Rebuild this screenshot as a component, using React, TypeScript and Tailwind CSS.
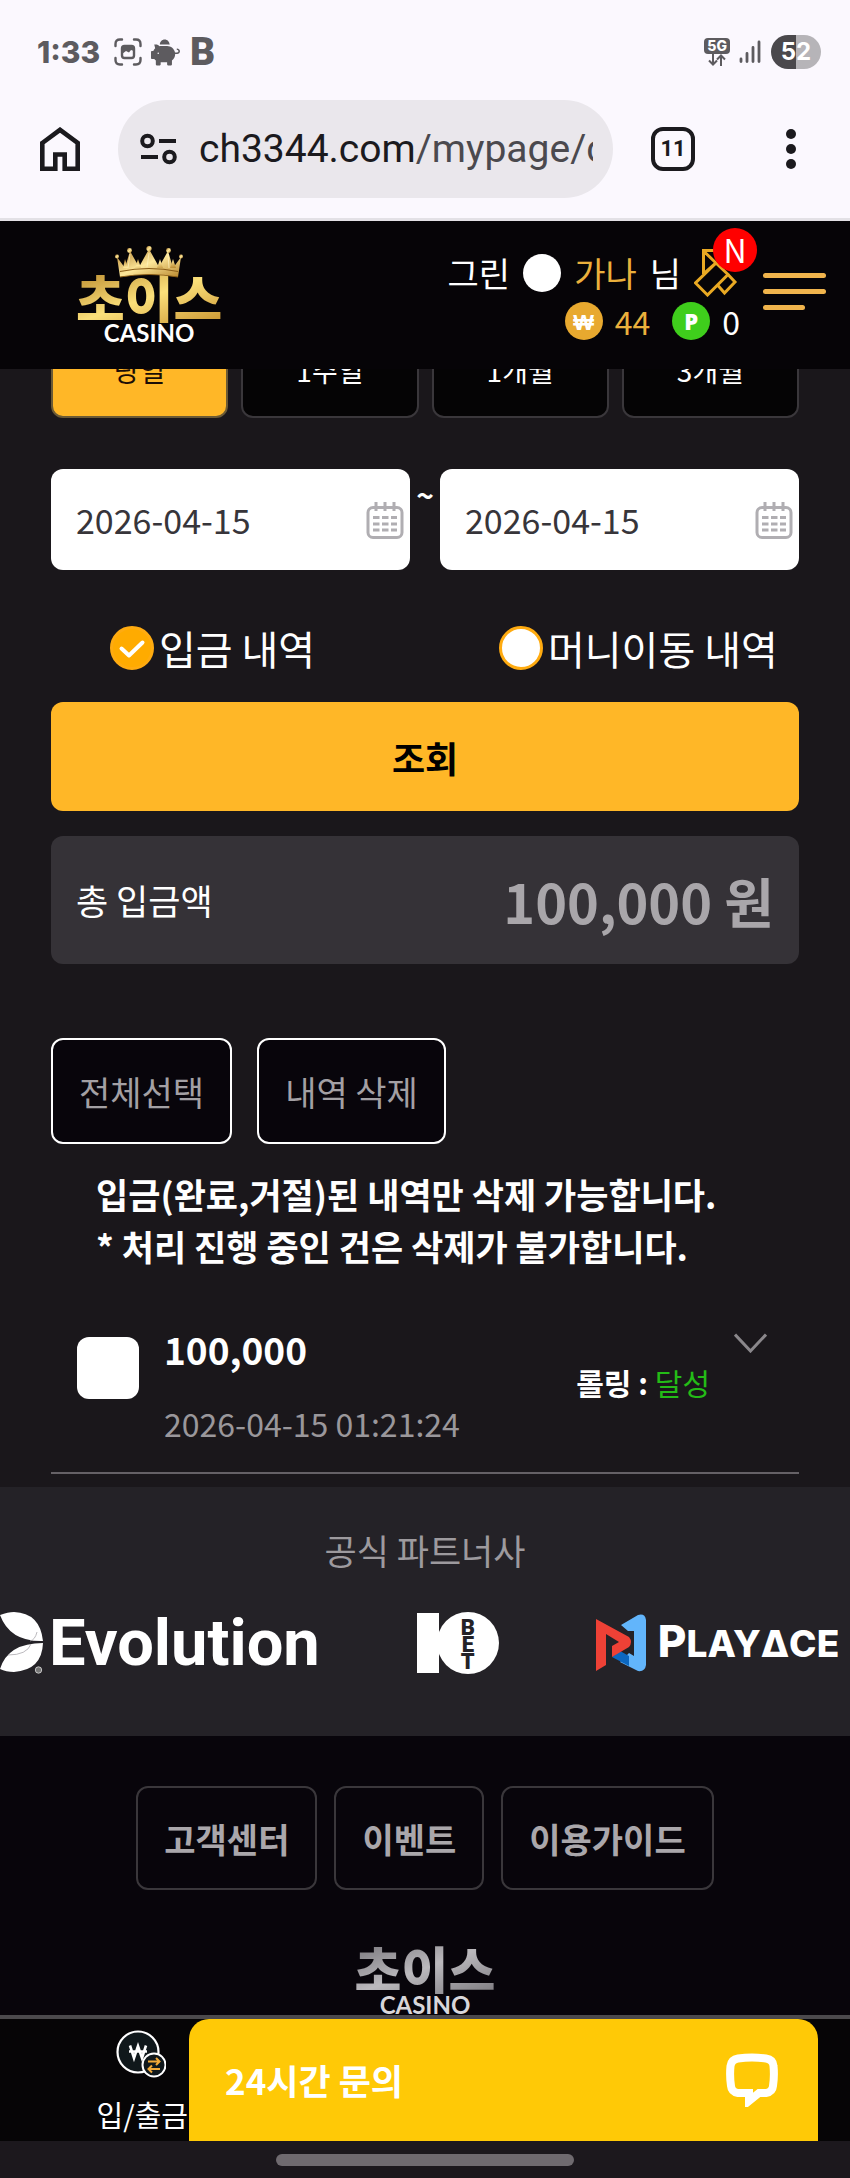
import { useState } from 'react'
import { FaPiggyBank } from 'react-icons/fa'

const periods = ['당일', '1주일', '1개월', '3개월']
const footerLinks = ['고객센터', '이벤트', '이용가이드']

export default function App() {
  const [period, setPeriod] = useState('당일')
  const [kind, setKind] = useState('deposit')
  const [from, setFrom] = useState('2026-04-15')
  const [to, setTo] = useState('2026-04-15')
  const [checked, setChecked] = useState(false)

  return (
    <div className="w-full overflow-hidden bg-[#1a171b] font-['Noto_Sans_CJK_KR',sans-serif] text-white">
      <StatusBar />
      <BrowserBar />
      <Header />

      <main className="px-[51px] pb-[13px]">
        <div className="flex h-[49px] items-end gap-[13px] overflow-hidden">
          {periods.map(p => (
            <button
              key={p}
              onClick={() => setPeriod(p)}
              className={`h-[96px] flex-1 shrink-0 rounded-xl border-2 text-[28px] ${
                p === period ? 'border-[#6b5a35] bg-[#ffb727] text-[#1a0d06]' : 'border-[#3a373b] bg-[#050405]'
              }`}
            >
              {p}
            </button>
          ))}
        </div>

        <div className="mt-[51px] flex">
          <DateBox label="시작일" value={from} onChange={setFrom} />
          <span className="w-[30px] text-center text-[30px] font-bold leading-[50px]">~</span>
          <DateBox label="종료일" value={to} onChange={setTo} />
        </div>

        <div className="mt-[56px] grid grid-cols-2 gap-[30px]">
          <Radio label="입금 내역" checked={kind === 'deposit'} onChange={() => setKind('deposit')} />
          <Radio label="머니이동 내역" checked={kind === 'move'} onChange={() => setKind('move')} />
        </div>

        <button className="mt-8 h-[109px] w-full rounded-xl bg-[#ffb727] text-[36px] font-bold text-black">조회</button>

        <div className="mt-[25px] flex h-[128px] items-center justify-between rounded-xl bg-[#353237] px-[25px]">
          <span className="text-[35px]">총 입금액</span>
          <span className="text-[54px] font-bold text-[#a9a6aa]">100,000 원</span>
        </div>

        <div className="mt-[74px] flex gap-[25px] text-[34px] text-[#a3a0a4]">
          <button className="h-[106px] rounded-xl border-2 border-white bg-[#08050b] px-[26px]">전체선택</button>
          <button className="h-[106px] rounded-xl border-2 border-white bg-[#08050b] px-[26px]">내역 삭제</button>
        </div>

        <p className="mt-6 pl-[45px] text-[35px] font-bold leading-[52px]">
          입금(완료,거절)된 내역만 삭제 가능합니다.
          <br />* 처리 진행 중인 건은 삭제가 불가합니다.
        </p>

        <div className="mt-[48px] flex border-b-2 border-[#656166] pb-6 pl-[26px] pr-8">
          <input
            type="checkbox"
            aria-label="100,000 내역 선택"
            checked={checked}
            onChange={e => setChecked(e.target.checked)}
            className="mt-[17px] h-[62px] w-[62px] appearance-none rounded-xl bg-white checked:bg-[#ffb727]"
          />
          <div className="ml-[25px] flex-1">
            <div className="text-[37px] font-bold leading-[58px]">100,000</div>
            <div className="mt-5 text-[32px] leading-[50px] text-[#9a979b]">2026-04-15 01:21:24</div>
          </div>
          <div className="mt-[42px] text-[30px] font-bold leading-10">
            롤링 : <span className="font-normal text-[#24bb17]">달성</span>
          </div>
          <button aria-label="상세 보기" className="ml-6 mt-[13px] self-start">
            <svg width="33" height="20" viewBox="0 0 33 20" fill="none" stroke="#8a878b" strokeWidth="3">
              <path d="M1 1.5 16.5 18 32 1.5" />
            </svg>
          </button>
        </div>
      </main>

      <Partners />

      <footer className="flex flex-col items-center bg-[#08050b] pt-[50px]">
        <nav className="flex gap-[17px]">
          {footerLinks.map(l => (
            <a
              key={l}
              href="#"
              className="flex h-[104px] items-center rounded-xl border-2 border-[#3a373b] px-[26px] text-[34px] font-bold text-[#aaa7ab]"
            >
              {l}
            </a>
          ))}
        </nav>
        <div className="mt-[52px] flex flex-col items-center">
          <span className="bg-gradient-to-br from-[#77757a] via-[#bbb9bd] to-[#7d7b80] bg-clip-text text-[51px] font-black leading-[52px] text-transparent">
            초이스
          </span>
          <span className="font-['Lato',sans-serif] text-[24px] font-bold leading-[21px] text-[#d8d6da]">CASINO</span>
        </div>
      </footer>

      <BottomBar />
    </div>
  )
}

function StatusBar() {
  return (
    <div className="flex h-[100px] items-center justify-between bg-[#fbf8fe] pl-[37px] pr-[29px] pt-1 text-[#5d5b5f]">
      <div className="flex items-center">
        <span className="w-[77px] font-['Inter',sans-serif] text-[30px] font-extrabold">1:33</span>
        <svg width="28" height="28" viewBox="0 0 28 28" fill="none" stroke="currentColor" strokeWidth="2.4" strokeLinecap="round">
          <path d="M1.5 8V6Q1.5 1.5 6 1.5H8M20 1.5h2Q26.5 1.5 26.5 6v2M26.5 20v2q0 4.5-4.5 4.5h-2M8 26.5H6Q1.5 26.5 1.5 22v-2" />
          <rect x="8" y="8" width="12" height="12" rx="2.5" />
          <path d="M8 13.5V10q0-2 2-2h8q2 0 2 2v3l-3-1-2 2.5-3-1.5-4 3z" fill="currentColor" stroke="none" />
        </svg>
        <FaPiggyBank size={29} className="ml-[9px] -scale-x-100" />
        <span className="ml-[10px] font-['Roboto',sans-serif] text-[39px] font-black leading-10">B</span>
      </div>
      <div className="flex items-center font-['Inter',sans-serif]">
        <div className="flex flex-col items-center">
          <span className="rounded bg-[#5d5b5f] px-[3px] text-[14px] font-extrabold leading-4 text-white">5G</span>
          <svg width="18" height="12" viewBox="0 0 18 12" fill="none" stroke="currentColor" strokeWidth="2">
            <path d="M5 0v10M1 6.5l4 4 4-4M13 12V2M9 5.5l4-4 4 4" />
          </svg>
        </div>
        <svg width="22" height="24" viewBox="0 0 22 24" className="ml-[9px]" stroke="currentColor" strokeWidth="2.8" strokeLinecap="round">
          <path d="M2 19v2.5M8 13.5v8M14 7.5v14M20 2v19.5" />
        </svg>
        <span className="ml-[10px] flex h-[34px] w-[50px] items-center justify-center rounded-full bg-linear-to-r from-[#4a484c] from-50% to-[#b6b4b8] to-50% text-[24px] font-bold text-white">
          52
        </span>
      </div>
    </div>
  )
}

function BrowserBar() {
  return (
    <div className="flex items-center border-b-[3px] border-[#e3e1e6] bg-[#fbf8fe] pb-5 pl-10 pr-[54px] text-[#1b1a1e]">
      <button aria-label="홈">
        <svg width="40" height="44" viewBox="0 0 40 44" fill="none" stroke="currentColor" strokeWidth="4.6">
          <path d="M2.3 16 20 2.8 37.7 16v25.7H24.7V27.5h-9.4v14.2H2.3z" />
        </svg>
      </button>
      <button className="ml-[38px] flex h-[98px] flex-1 items-center overflow-hidden rounded-full bg-[#eae7ec] pl-[22px] pr-5">
        <svg width="37" height="32" viewBox="0 0 37 32" fill="none" stroke="currentColor" strokeWidth="4" className="shrink-0">
          <circle cx="7.5" cy="8" r="5.3" />
          <path d="M19 8h17M1 24h17" />
          <circle cx="29.5" cy="24" r="5.3" />
        </svg>
        <span className="ml-[22px] flex-1 overflow-hidden whitespace-nowrap text-left font-['Roboto',sans-serif] text-[39px] leading-[60px]">
          ch3344.com<span className="text-[#4b494e]">/mypage/c</span>
        </span>
      </button>
      <button className="ml-[38px] h-11 w-11 rounded-xl border-4 border-[#1b1a1e] font-['Roboto',sans-serif] text-[22px] font-bold leading-9">
        11
      </button>
      <button aria-label="메뉴 더보기" className="ml-[91px]">
        <svg width="10" height="40" viewBox="0 0 10 40" fill="currentColor">
          <circle cx="5" cy="5" r="5" />
          <circle cx="5" cy="20" r="5" />
          <circle cx="5" cy="35" r="5" />
        </svg>
      </button>
    </div>
  )
}

function Header() {
  return (
    <header className="flex items-start justify-between bg-[#060407] pb-[26px] pl-[76px] pr-6 pt-[25px]">
      <a href="#" aria-label="초이스 카지노" className="flex flex-col items-center">
        <Crown />
        <span className="-mt-[9px] bg-gradient-to-br from-[#b98a2a] via-[#fbe07a] to-[#c9952f] bg-clip-text text-[53px] font-black leading-[52px] text-transparent">
          초이스
        </span>
        <span className="font-['Lato',sans-serif] text-[24px] font-bold leading-5">CASINO</span>
      </a>
      <div className="flex">
        <div className="mt-2 flex flex-col items-end gap-[10px] leading-[38px]">
          <div className="flex h-[38px] items-center gap-[13px] text-[34px] leading-[38px]">
            <span>그린</span>
            <span className="h-[38px] w-[38px] rounded-full bg-white" />
            <span className="text-[#eab03c]">가나</span>
            <span>님</span>
            <a href="#" aria-label="쿠폰" className="relative">
              <svg width="46" height="48" viewBox="0 0 46 48" fill="none" stroke="#e9a923" strokeWidth="3">
                <path d="M22 1.5H9.5V25M9.5 2 22 14M22 14 1.5 34 13.5 46 34 25.5zM24 36.5l6.5 7.5L41 33 34 25.5M22 14 9.5 25" />
              </svg>
              <span className="absolute -top-[21px] left-[19px] h-11 w-11 rounded-full bg-[#ff0000] text-center text-[32px] leading-[42px]">N</span>
            </a>
          </div>
          <div className="flex items-center text-[32px]">
            <Coin className="bg-[#e8a92f]">₩</Coin>
            <span className="ml-3 text-[#eab03c]">44</span>
            <Coin className="ml-[22px] bg-[#3fce1c]">P</Coin>
            <span className="ml-3">0</span>
          </div>
        </div>
        <button aria-label="메뉴" className="ml-[23px] mt-[27px] flex flex-col gap-[11px]">
          <span className="h-[5px] w-[63px] rounded-full bg-[#f0b44c]" />
          <span className="h-[5px] w-[63px] rounded-full bg-[#f0b44c]" />
          <span className="h-[5px] w-[42px] rounded-full bg-[#f0b44c]" />
        </button>
      </div>
    </header>
  )
}

function Coin({ className, children }: { className: string; children: React.ReactNode }) {
  return (
    <span className={`h-[38px] w-[38px] rounded-full text-center font-['Open_Sans',sans-serif] text-[22px] font-extrabold leading-[38px] text-white ${className}`}>
      {children}
    </span>
  )
}

function Crown() {
  return (
    <svg width="68" height="34" viewBox="0 0 68 34" className="relative z-10">
      <defs>
        <linearGradient id="crown" x1="0" y1="0" x2="1" y2="1">
          <stop offset="0" stopColor="#b07c28" />
          <stop offset="0.5" stopColor="#fde79a" />
          <stop offset="1" stopColor="#b8862b" />
        </linearGradient>
      </defs>
      <g fill="url(#crown)">
        <path d="M2 11 10 22 15 5 24 21 34 3 44 21 53 5 58 22 66 11 63 31Q34 26 5 31z" />
        <path d="m10 13 3 9H8zM58 13l3 9h-6zM23 13l3 9h-6zM45 13l3 9h-6z" />
        <circle cx="2" cy="10.5" r="1.9" />
        <circle cx="14.5" cy="4.5" r="2.4" />
        <circle cx="34" cy="2.6" r="2.6" />
        <circle cx="53.5" cy="4.5" r="2.4" />
        <circle cx="66" cy="10.5" r="1.9" />
      </g>
      <path d="M5 25.5Q34 19.5 63 25.5M5 31Q34 26 63 31" fill="none" stroke="#8a5c17" strokeWidth="1.2" />
      <path d="M15 8 13 22M34 7l-2 14M53 8l1 14" stroke="#fff3c0" strokeWidth="1" opacity="0.7" />
    </svg>
  )
}

function DateBox({ label, value, onChange }: { label: string; value: string; onChange: (v: string) => void }) {
  return (
    <div className="flex h-[101px] min-w-0 flex-1 items-center rounded-xl bg-white pl-[25px] pr-[6px]">
      <input
        type="text"
        aria-label={label}
        value={value}
        onChange={e => onChange(e.target.value)}
        className="min-w-0 flex-1 bg-transparent text-[34px] leading-[52px] text-[#37353a] outline-none"
      />
      <button aria-label={`${label} 달력`}>
        <svg width="38" height="38" viewBox="0 0 38 38" fill="none" stroke="#b0aeb2" strokeWidth="3">
          <rect x="2" y="6.5" width="34" height="30" rx="5" />
          <path d="M10 1v9M19 1v9M28 1v9" />
          <path d="M7 16.5h24M7 23h24M7 29h24" strokeDasharray="6.5 2.5" />
        </svg>
      </button>
    </div>
  )
}

function Radio({ label, checked, onChange }: { label: string; checked: boolean; onChange: () => void }) {
  return (
    <label className="flex h-11 items-center whitespace-nowrap pl-[59px] text-[40px]">
      <span className="grid">
        <input
          type="radio"
          name="kind"
          checked={checked}
          onChange={onChange}
          className="col-start-1 row-start-1 h-11 w-11 appearance-none rounded-full border-[3px] border-[#ffab10] bg-white checked:bg-[#ffab00]"
        />
        {checked && (
          <svg width="44" height="44" viewBox="0 0 44 44" className="pointer-events-none col-start-1 row-start-1" fill="none" stroke="#fff" strokeWidth="4" strokeLinecap="round" strokeLinejoin="round">
            <path d="M11.5 22.5 19 29.5 32.5 16.5" />
          </svg>
        )}
      </span>
      <span className="ml-[5px]">{label}</span>
    </label>
  )
}

function Partners() {
  return (
    <section className="bg-[#242227] pb-[63px] pt-[38px]">
      <h2 className="text-center text-[35px] leading-[50px] text-[#9d9a9e]">공식 파트너사</h2>
      <div className="mt-[37px] flex h-[61px] items-center gap-[97px] whitespace-nowrap">
        <div className="flex shrink-0 items-center">
          <svg width="43" height="62" viewBox="0 0 43 62" fill="#fff">
            <path d="M0 3Q8 0 14 0 40 1 43 29 10 30 0 3zM43 31Q42 58 14 60 6 60 0 57 8 31 43 31z" />
            <path d="M37 20Q35 28 30 29M8 43Q27 43 31 32" fill="none" stroke="#a9a7ac" strokeWidth="0.8" />
            <circle cx="38.5" cy="58" r="3.2" fill="#777" stroke="#ddd" strokeWidth="0.8" />
          </svg>
          <span className="ml-[6px] font-['Roboto',sans-serif] text-[65px] font-bold leading-[60px]">Evolution</span>
        </div>
        <div className="flex shrink-0 items-center">
          <span className="h-[60px] w-[22px] bg-white" />
          <span className="-ml-[2px] flex h-[62px] w-[62px] flex-col items-center justify-center rounded-full bg-white pt-[3px] font-['Roboto',sans-serif] text-[22px] font-black leading-[17px] text-[#242227]">
            <span>B</span>
            <span>E</span>
            <span>T</span>
          </span>
        </div>
        <div className="flex shrink-0 items-center">
          <svg width="50" height="58" viewBox="0 0 50 58">
            <path d="M25 11 42 1Q49-1 50 6V51Q49 58 42 57L24 48 33 39 38 42V17L32 17z" fill="#62b5fb" />
            <path d="M16 43 24 37 33 42V52z" fill="#0c67c0" />
            <path d="M0 5 33 23Q37 28 33 33L16 43V32L23 28 10 20V51L0 57z" fill="#ee4136" />
          </svg>
          <span className="ml-3 font-['Inter',sans-serif] text-[37px] font-extrabold leading-[50px]">
            <span className="text-[44px]">P</span>LAYΔCE
          </span>
        </div>
      </div>
    </section>
  )
}

function BottomBar() {
  return (
    <div>
      <div className="flex border-t-4 border-[#4b494c] bg-[#060506]">
        <a href="#" className="flex w-[189px] flex-col items-end pr-px pt-[11px]">
          <svg width="50" height="48" viewBox="0 0 50 48" className="mr-[22px]">
            <circle cx="22" cy="22" r="20.5" fill="#10181b" stroke="#fff" strokeWidth="2.2" />
            <path d="M14 15.5 18 28 22 16 26 28 30 15.5M13 21.5H31" fill="none" stroke="#fff" strokeWidth="2.6" />
            <circle cx="38" cy="35" r="11.5" fill="#10181b" stroke="#fff" strokeWidth="2" />
            <path d="M32 31.5h11M40 28l3.5 3.5L40 35M44 39H33M36 35.5 32.5 39l3.5 3.5" fill="none" stroke="#f0a838" strokeWidth="2" />
          </svg>
          <span className="mt-[14px] text-[29px] leading-[44px]">입/출금</span>
        </a>
        <button className="mr-8 flex h-[122px] flex-1 items-center justify-between rounded-t-[20px] bg-[#ffc906] pl-9 pr-10 text-[35px] font-bold">
          24시간 문의
          <svg width="52" height="54" viewBox="0 0 52 54" fill="none" stroke="#fff" strokeWidth="8">
            <path d="M12 5.5Q26 3.5 40 5.5 47 6.5 47.5 13 48.5 23 47 33 46.5 39 40 40H33L23 48V40H12Q5.5 39 5 33 3.5 23 4.5 13 5.5 6.5 12 5.5z" />
          </svg>
        </button>
      </div>
      <div className="flex justify-center bg-[#1c181d] pb-3 pt-[13px]">
        <span className="h-3 w-[298px] rounded-full bg-[#6f6a6f]" />
      </div>
    </div>
  )
}
